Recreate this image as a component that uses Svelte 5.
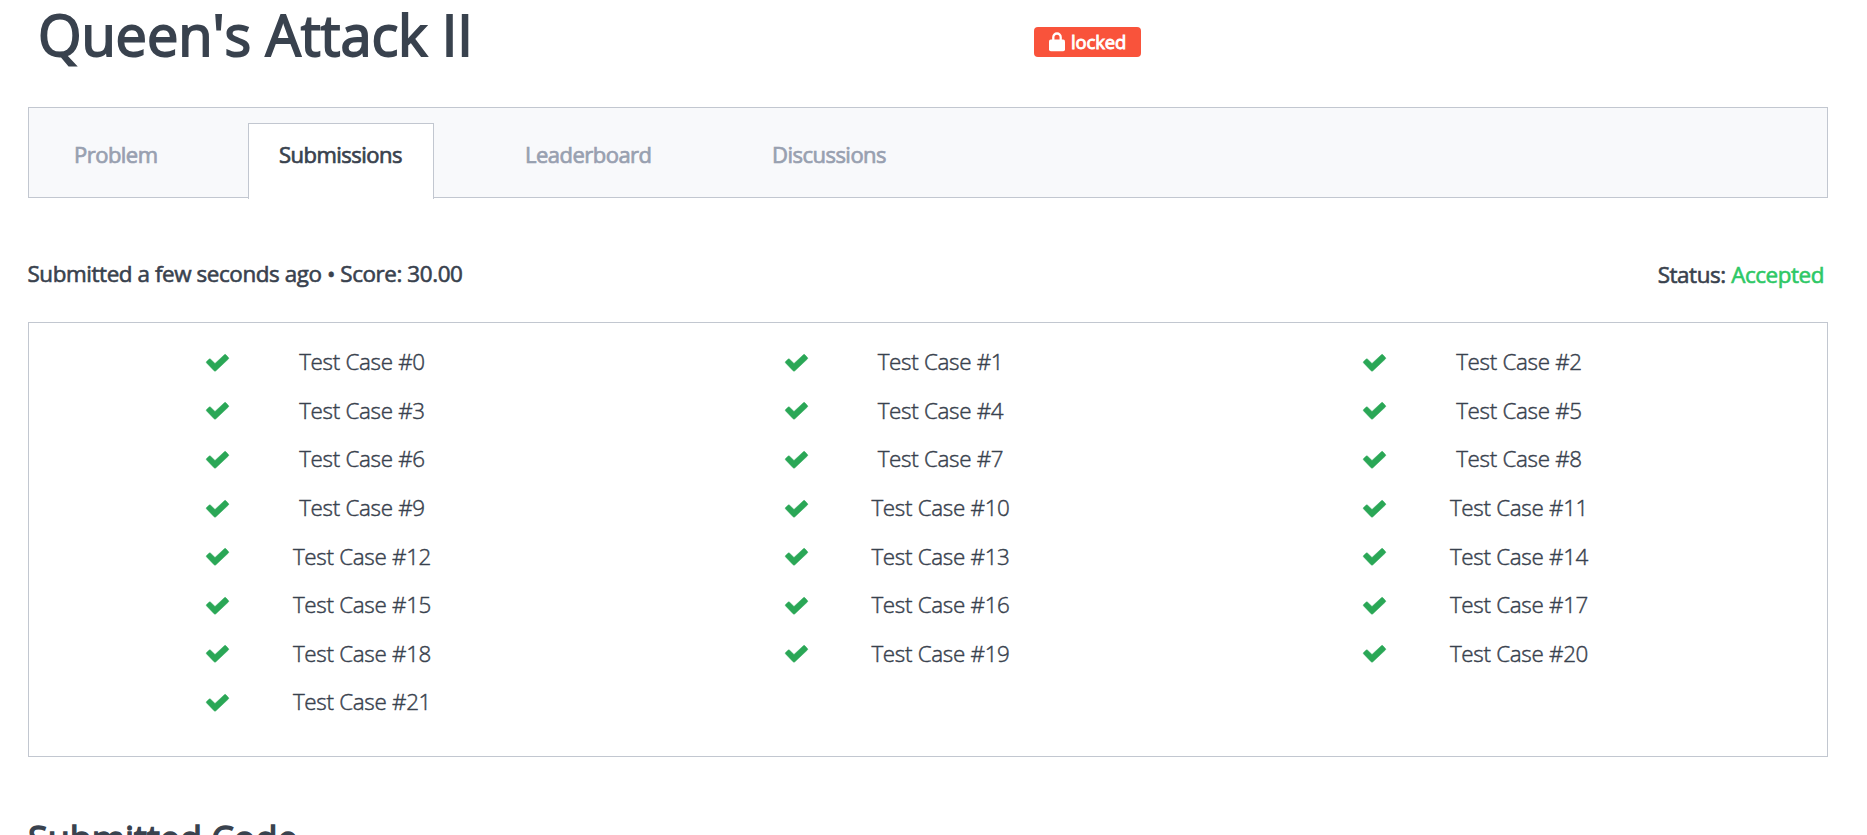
<script>
  const tabs = [
    { name: 'Problem', width: 145 },
    { name: 'Submissions', width: 186, active: true },
    { name: 'Leaderboard', width: 187 },
    { name: 'Discussions', width: 176 },
  ];
  const cases = Array.from({ length: 22 }, (_, i) => i);
</script>

<main>
  <header>
    <h1>Queen's Attack II</h1>
    <span class="label">
      <svg width="16" height="20" viewBox="0 0 16 20" aria-hidden="true">
        <path d="M4.3 9V5.2a3.7 3.7 0 0 1 7.4 0V9" fill="none" stroke="#fff" stroke-width="2.3" />
        <rect x="0" y="7.6" width="16" height="11.6" rx="1.8" fill="#fff" />
      </svg>
      <b>locked</b>
    </span>
  </header>

  <nav>
    {#each tabs as tab}
      <a class="tab" class:active={tab.active} style="width: {tab.width}px">{tab.name}</a>
    {/each}
  </nav>

  <section class="summary">
    <p class="submitted">Submitted a few seconds ago • Score: 30.00</p>
    <p class="status">Status: <span>Accepted</span></p>
  </section>

  <section class="results">
    {#each cases as n}
      <div class="case">
        <svg width="23" height="18" viewBox="0 0 23 18" aria-hidden="true">
          <path d="M4.6 5.2Q3.8 4.5 3 5.3L.6 7.5Q-.1 8.2.6 8.9L8.1 16.8Q9 17.7 9.9 16.8L22.4 5Q23.1 4.2 22.4 3.5L19.9.8Q19.2 0 18.4.7L9 9.5Z" fill="#2aa756" stroke="#2aa756" stroke-width="0.5" />
        </svg>
        <span>Test Case #{n}</span>
      </div>
    {/each}
  </section>

  <h2>Submitted Code</h2>
</main>

<style>
  :global(body) {
    margin: 0;
    background: #fff;
    overflow: hidden;
  }
  main {
    box-sizing: border-box;
    width: 1867px;
    height: 835px;
    overflow: hidden;
    padding: 0 39px 0 28px;
    font: 300 22.4px/30px "Open Sans", sans-serif;
    color: #39424e;
  }
  header {
    display: flex;
    align-items: flex-start;
    height: 107px;
  }
  h1 {
    box-sizing: border-box;
    width: 1006px;
    margin: 0;
    padding-left: 10px;
    font-size: 56px;
    line-height: 68px;
    font-weight: 400;
    letter-spacing: -0.14px;
    -webkit-text-stroke: 1.8px #39424e;
  }
  .label {
    display: flex;
    align-items: center;
    gap: 6px;
    box-sizing: border-box;
    width: 107px;
    height: 30px;
    margin-top: 27px;
    padding-left: 15px;
    border-radius: 4px;
    background: #f9533b;
    color: #fff;
  }
  .label b {
    font-size: 18.4px;
    font-weight: 400;
    letter-spacing: -0.1px;
    -webkit-text-stroke: 0.9px #fff;
  }
  nav {
    display: flex;
    align-items: flex-start;
    gap: 60px;
    box-sizing: border-box;
    height: 91px;
    padding: 15px 0 0 14px;
    border: 1px solid #c2c7d0;
    background: #f8f9fb;
  }
  .tab {
    box-sizing: border-box;
    height: 76px;
    padding: 15px 0 0 30px;
    border: 1px solid transparent;
    border-bottom: 0;
    color: #98a0b0;
    font-size: 22px;
    font-weight: 400;
    letter-spacing: -0.52px;
    -webkit-text-stroke: 0.7px currentColor;
  }
  .tab.active {
    border-color: #c2c7d0;
    background: #fff;
    color: #39424e;
  }
  .summary {
    display: flex;
    justify-content: space-between;
    height: 124px;
    padding-right: 4px;
    font-weight: 400;
    -webkit-text-stroke: 0.6px currentColor;
  }
  .summary p {
    margin: 61px 0 0;
    letter-spacing: -0.41px;
  }
  .summary .submitted {
    margin-left: -0.5px;
  }
  .summary .status {
    margin-top: 62px;
  }
  .status span {
    color: #2ec866;
    -webkit-text-stroke: 0.6px #2ec866;
  }
  .results {
    display: grid;
    grid-template-columns: repeat(3, 578.5px);
    grid-auto-rows: 48.6px;
    box-sizing: border-box;
    height: 435px;
    padding: 15px 0 0 177px;
    overflow: hidden;
    border: 1px solid #c2c7d0;
  }
  .case {
    display: flex;
    align-items: center;
  }
  .case svg {
    margin-top: 1px;
    overflow: visible;
  }
  .case span {
    width: 200px;
    margin-left: 33px;
    text-align: center;
    letter-spacing: -0.3px;
    -webkit-text-stroke: 0.45px currentColor;
  }
  h2 {
    margin: 57px 0 0;
    font-size: 36px;
    line-height: 49px;
    font-weight: 400;
    letter-spacing: -0.03px;
    -webkit-text-stroke: 1.4px #39424e;
  }
</style>
